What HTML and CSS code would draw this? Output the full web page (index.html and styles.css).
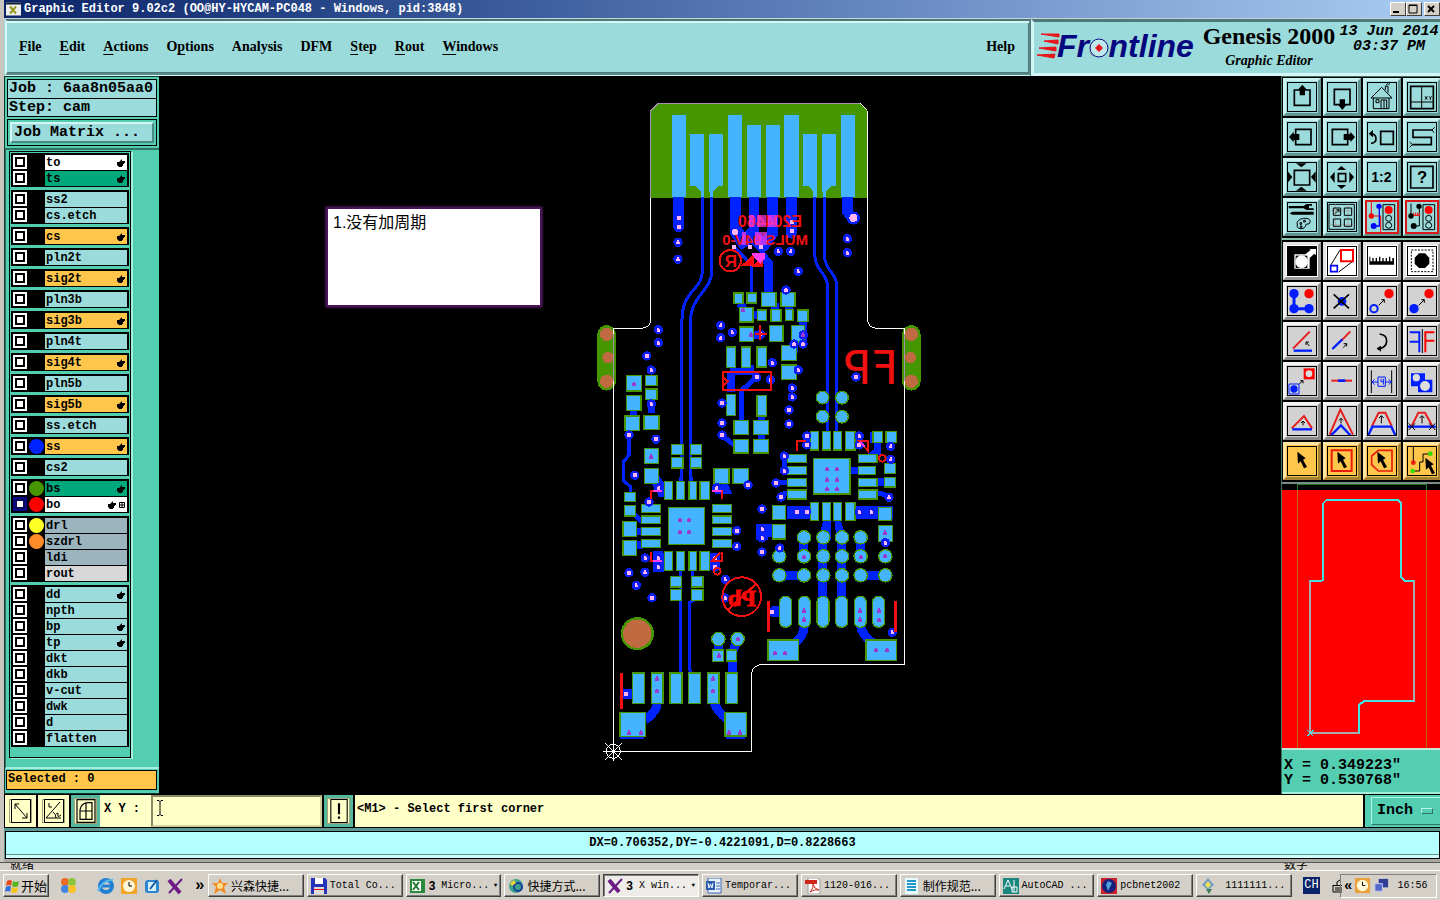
FILE: index.html
```html
<!DOCTYPE html>
<html lang="zh-CN">
<head>
<meta charset="utf-8">
<title>Graphic Editor 9.02c2</title>
<link rel="stylesheet" href="styles.css">
</head>
<body>
<svg class="defs" aria-hidden="true">
  <symbol id="hand" viewBox="0 0 8 8"><path d="M0 3h2l3-3v2h3v2H7v1H6v2H5v1H2L0 6z"/></symbol>
  <symbol id="sq" viewBox="0 0 6 6"><path d="M.5 .5h5v5h-5zM3 .5v5M.5 3h5" fill="none" stroke="#000"/></symbol>
  <g id="v"><circle r="14" fill="#0a1ef5"/><path d="M-5-2h2v-4h6v4h2v8H-5z" fill="#ffb4f4"/></g>
  <g id="w"><circle r="14" fill="#0a1ef5"/><path d="M-6-6H6V6H-6z" fill="#ffb4f4"/></g>
  <path id="m" d="M-6-3h3v-4h6v4h3v9H-6z" fill="#9a3ad2"/>
  <g id="cur"><path d="M31 17l25 20-8 4 12 22-9 4-10-21-8 7z"/></g>
</svg>

<div class="window">
  <header class="title">
    <svg class="xico" viewBox="0 0 15 13"><path fill="#eee" d="M0 0h15v13H0z"/><path fill="#123" d="M0 0h15v2H0z"/><path d="M4 4l6 7M10 4l-6 7" stroke="#999a20" stroke-width="2"/></svg>
    <h1>Graphic Editor 9.02c2 (OO@HY-HYCAM-PC048 - Windows, pid:3848)</h1>
    <div class="winbtns"><button aria-label="Minimize"><svg viewBox="0 0 12 10"><path d="M2 7h6v2H2z"/></svg></button><button aria-label="Maximize"><svg viewBox="0 0 12 10"><path d="M2 1h8v8H2z" fill="none" stroke="#000"/><path d="M2 1h8v1H2z"/></svg></button><button class="close" aria-label="Close"><svg viewBox="0 0 12 10"><path d="M3 2l6 6M9 2L3 8" stroke="#000" stroke-width="2"/></svg></button></div>
  </header>

  <div class="top">
    <nav class="menu">
      <button><u>F</u>ile</button><button><u>E</u>dit</button><button><u>A</u>ctions</button><button>O<u>p</u>tions</button><button>Analysis</button><button>DFM</button><button><u>S</u>tep</button><button><u>R</u>out</button><button><u>W</u>indows</button><button class="help">Help</button>
    </nav>
    <div class="brand">
      <svg class="logo" viewBox="0 0 162 40" role="img" aria-label="Frontline">
        <path d="M4 10h18v3zM7 17l14-1v4zM2 24l17-1v4zM0 31l18-1-1 4z" fill="#e8141c" stroke="#e8141c"/>
        <text x="20" y="33">Frontline</text>
        <circle cx="62" cy="24" r="10" fill="#9bdbdb"/><circle cx="62" cy="24" r="9" fill="#bfe8ea" stroke="#0b0b86" stroke-width="1"/><path d="M62 20l4 4-4 4-4-4z" fill="#e8141c"/>
      </svg>
      <div class="product"><strong>Genesis 2000</strong><em>Graphic Editor</em></div>
      <div class="clock"><span>13 Jun 2014</span><span>03:37 PM</span></div>
    </div>
  </div>

  <main class="main">
    <aside class="side">
      <div class="job"><div>Job : 6aa8n05aa0</div><div>Step: cam</div></div>
      <div class="matrix"><button>Job Matrix ...</button></div>
      <div class="scroll"><div class="layers">
        <div class="grp">
          <div class="row"><input type="checkbox" id="l1"><i></i><label for="l1" class="wh">to<svg><use href="#hand"/></svg></label></div>
          <div class="row"><input type="checkbox" id="l2"><i></i><label for="l2" class="gr">ts<svg><use href="#hand"/></svg></label></div>
        </div>
        <div class="grp">
          <div class="row"><input type="checkbox" id="l3"><i></i><label for="l3">ss2</label></div>
          <div class="row"><input type="checkbox" id="l4"><i></i><label for="l4">cs.etch</label></div>
        </div>
        <div class="grp"><div class="row"><input type="checkbox" id="l5"><i></i><label for="l5" class="or">cs<svg><use href="#hand"/></svg></label></div></div>
        <div class="grp"><div class="row"><input type="checkbox" id="l6"><i></i><label for="l6">pln2t</label></div></div>
        <div class="grp"><div class="row"><input type="checkbox" id="l7"><i></i><label for="l7" class="or">sig2t<svg><use href="#hand"/></svg></label></div></div>
        <div class="grp"><div class="row"><input type="checkbox" id="l8"><i></i><label for="l8">pln3b</label></div></div>
        <div class="grp"><div class="row"><input type="checkbox" id="l9"><i></i><label for="l9" class="or">sig3b<svg><use href="#hand"/></svg></label></div></div>
        <div class="grp"><div class="row"><input type="checkbox" id="l10"><i></i><label for="l10">pln4t</label></div></div>
        <div class="grp"><div class="row"><input type="checkbox" id="l11"><i></i><label for="l11" class="or">sig4t<svg><use href="#hand"/></svg></label></div></div>
        <div class="grp"><div class="row"><input type="checkbox" id="l12"><i></i><label for="l12">pln5b</label></div></div>
        <div class="grp"><div class="row"><input type="checkbox" id="l13"><i></i><label for="l13" class="or">sig5b<svg><use href="#hand"/></svg></label></div></div>
        <div class="grp"><div class="row"><input type="checkbox" id="l14"><i></i><label for="l14">ss.etch</label></div></div>
        <div class="grp"><div class="row"><input type="checkbox" id="l15"><i class="blue"></i><label for="l15" class="or">ss<svg><use href="#hand"/></svg></label></div></div>
        <div class="grp"><div class="row"><input type="checkbox" id="l16"><i></i><label for="l16">cs2</label></div></div>
        <div class="grp">
          <div class="row"><input type="checkbox" id="l17"><i class="green"></i><label for="l17" class="gr">bs<svg><use href="#hand"/></svg></label></div>
          <div class="row"><input type="checkbox" id="l18" class="work"><i class="red"></i><label for="l18" class="wh">bo<svg><use href="#hand"/></svg><svg class="s"><use href="#sq"/></svg></label></div>
        </div>
        <div class="grp">
          <div class="row"><input type="checkbox" id="l19"><i class="yellow"></i><label for="l19" class="dr">drl</label></div>
          <div class="row"><input type="checkbox" id="l20"><i class="orange"></i><label for="l20" class="dr">szdrl</label></div>
          <div class="row"><input type="checkbox" id="l21"><i></i><label for="l21" class="dr">ldi</label></div>
          <div class="row"><input type="checkbox" id="l22"><i></i><label for="l22" class="ro">rout</label></div>
        </div>
        <div class="grp">
          <div class="row"><input type="checkbox" id="l23"><i></i><label for="l23">dd<svg><use href="#hand"/></svg></label></div>
          <div class="row"><input type="checkbox" id="l24"><i></i><label for="l24">npth</label></div>
          <div class="row"><input type="checkbox" id="l25"><i></i><label for="l25">bp<svg><use href="#hand"/></svg></label></div>
          <div class="row"><input type="checkbox" id="l26"><i></i><label for="l26">tp<svg><use href="#hand"/></svg></label></div>
          <div class="row"><input type="checkbox" id="l27"><i></i><label for="l27">dkt</label></div>
          <div class="row"><input type="checkbox" id="l28"><i></i><label for="l28">dkb</label></div>
          <div class="row"><input type="checkbox" id="l29"><i></i><label for="l29">v-cut</label></div>
          <div class="row"><input type="checkbox" id="l30"><i></i><label for="l30">dwk</label></div>
          <div class="row"><input type="checkbox" id="l31"><i></i><label for="l31">d</label></div>
          <div class="row"><input type="checkbox" id="l32"><i></i><label for="l32">flatten</label></div>
        </div>
      </div></div>
      <div class="selected">Selected : 0</div>
    </aside>

    <section class="canvas">
      <svg class="board" viewBox="159 76 1122 718">
       <g transform="translate(590 90) scale(.33333)">
        <path fill="#459600" d="M182 62L205 40H810L832 62V324H182z"/>
        <!-- copper traces -->
        <g class="tr">
          <path stroke-width="32" stroke-linecap="round" d="M266 315V410M436 315V426M492 315V440M548 315V430L520 470M604 315V430M772 315V365L788 384"/>
          <path stroke-width="40" d="M470 420L530 480M436 420L470 470"/>
          <path stroke-width="26" d="M510 490L536 520V620"/>
          <path stroke-width="9" d="M432 470L485 525V610M337 290V545C337 600 276 600 276 690V1175M365 290V545C365 600 302 620 302 690V1175M675 290V500C675 540 712 550 712 585V1030M704 290V500C704 540 740 550 740 585V1030"/>
          <path stroke-width="24" d="M450 640L470 670M555 640V670M598 640V670M470 675H520M640 690V760M520 735H490M612 760V790"/>
          <g transform="translate(0 660)">
            <path stroke-width="22" d="M423 190V245M420 185H480V165M184 260V310M130 300V320M515 315V400M200 525L222 545M375 540H410L400 515M850 365V400M862 395V425L840 440M780 482H810M860 516H885M650 376V410M808 376V410M130 665H155M450 500L475 525"/>
            <path stroke-width="15" d="M500 202L456 240V335M395 375L432 405M860 550Q885 550 898 562M572 560Q580 548 595 550M558 518H595M585 438V480M125 605L155 635"/>
            <path stroke-width="10" d="M117 370V435L101 455V512L121 530V550M271 500V520M304 500V520"/>
            <path stroke-width="38" d="M590 607H660M795 607H910M516 643V690M516 662H560"/>
            <path fill="#0022ff" stroke="none" d="M700 630H722V690H684zM733 630H752L772 690H740z"/>
            <path stroke-width="32" d="M190 500L220 545V560"/>
          </g>
          <g transform="translate(0 1290)">
            <path stroke-width="27" d="M642 50V110M698 50V240M754 50V240M812 50V110M568 166H642M812 166H886M643 315Q643 350 610 372M811 315Q815 345 850 370M385 357V400M443 360L428 395V470M202 545Q202 575 165 600M372 545Q380 575 415 600"/>
            <path stroke-width="32" d="M205 100V155M220 108H190M375 98V150M95 522H127M545 275H575"/>
            <path stroke-width="9" d="M271 150V460M307 150V170M322 235L298 248V450L310 465"/>
            <path stroke-width="22" d="M141 35H160M141 75H160M125 22V30"/>
            <path stroke-width="8" d="M90 653H162M408 653H465"/>
          </g>
        </g>
        <!-- edge connector fingers -->
        <path fill="#45b4ff" d="M246 75h42v247h-42zM300 132h42v173h-9l-18-17h-15zM357 132h42v156h-12l-17 17h-13zM414 75h42v247h-42zM471 105h42v217h-42zM528 105h42v217h-42zM582 75h45v247h-45zM639 132h42v173h-11l-14-17h-17zM696 132h42v156h-14l-15 17h-13zM753 75h42v247h-42zM333 300h9v22h-9zM360 300h9v22h-9zM670 300h10v22h-10zM699 300h10v22h-10z"/>
        <!-- solder pads -->
        <g class="pad">
          <path d="M432 609h27v31h-27zM471 609h29v30h-29zM514 608h44v41h-44zM573 608h42v41h-42zM449 652h40v44h-40zM503 660h26v31h-26zM543 659h30v35h-30zM586 659h23v32h-23zM623 660h31v34h-31z"/>
          <g transform="translate(0 660)">
            <path d="M449 51h42v43h-42zM539 46h40v49h-40zM604 47h40v49h-40zM575 107h44v45h-44zM575 165h44v44h-44zM410 111h26v62h-26zM455 111h26v62h-26zM501 111h28v60h-28zM410 254h26v62h-26zM501 256h28v62h-28zM432 332h44v41h-44zM490 332h45v41h-45zM432 389h44v40h-44zM490 389h45v40h-45z"/>
            <path d="M110 197h44v46h-44zM167 197h34v30h-34zM167 237h34v31h-34zM110 257h43v45h-43zM105 318h43v43h-43zM162 317h45v41h-45zM164 416h41v45h-41zM164 475h41v45h-41zM245 404h34v30h-34zM302 404h32v30h-32zM245 443h34v31h-34zM302 443h32v31h-32zM372 476h45v45h-45zM429 476h46v44h-46zM223 515h25v54h-25zM260 515h24v54h-24zM297 515h22v54h-22zM330 515h29v54h-29zM104 548h33v26h-33zM104 587h33v31h-33zM99 635h41v44h-41zM155 584h56v23h-56zM155 618h56v23h-56zM155 653h56v23h-56zM155 689h56v23h-56zM368 584h56v23h-56zM368 618h56v23h-56zM368 653h56v23h-56zM368 689h56v23h-56zM236 593h107v110h-107z"/>
            <path d="M661 365h24v55h-24zM698 365h23v55h-23zM731 365h23v55h-23zM767 365h28v55h-28zM849 365h29v33h-29zM888 365h31v33h-31zM592 434h57v23h-57zM592 470h57v23h-57zM592 506h57v23h-57zM592 540h57v27h-57zM806 434h55v23h-55zM806 470h51v23h-51zM806 506h55v23h-55zM806 540h55v27h-55zM671 446h109v106h-109zM661 578h24v54h-24zM698 578h23v54h-23zM731 578h23v54h-23zM767 578h28v54h-28zM548 587h39v41h-39zM866 593h39v39h-39zM884 460h33v30h-33zM884 503h33v28h-33zM548 644h39v43h-39zM866 647h41v48h-41z"/>
            <circle cx="698" cy="263" r="19"/><circle cx="756" cy="263" r="19"/><circle cx="698" cy="320" r="19"/><circle cx="756" cy="320" r="19"/>
          </g>
          <g transform="translate(0 1290)">
            <path d="M99 62h41v45h-41zM223 95h25v56h-25zM260 95h24v56h-24zM297 95h22v56h-22zM330 95h29v56h-29zM242 170h33v31h-33zM305 170h34v31h-34zM242 209h33v32h-33zM305 209h34v32h-34zM368 390h32v34h-32zM410 390h30v33h-30zM128 459h35v91h-35zM184 459h35v91h-35zM240 459h36v91h-36zM296 459h35v91h-35zM352 459h35v91h-35zM408 459h34v91h-34zM90 578h77v71h-77zM405 578h64v70h-64zM534 360h91v61h-91zM828 360h91v61h-91z"/>
            <circle cx="385" cy="357" r="20"/><circle cx="443" cy="357" r="20"/>
            <circle cx="642" cy="52" r="20"/><circle cx="700" cy="52" r="20"/><circle cx="756" cy="52" r="20"/><circle cx="812" cy="52" r="20"/>
            <circle cx="568" cy="109" r="20"/><circle cx="642" cy="109" r="20"/><circle cx="700" cy="109" r="20"/><circle cx="756" cy="109" r="20"/><circle cx="812" cy="109" r="20"/><circle cx="886" cy="109" r="20"/>
            <circle cx="568" cy="166" r="20"/><circle cx="642" cy="166" r="20"/><circle cx="700" cy="166" r="20"/><circle cx="756" cy="166" r="20"/><circle cx="812" cy="166" r="20"/><circle cx="886" cy="166" r="20"/>
            <rect x="569" y="229" width="36" height="93" rx="17"/><rect x="625" y="229" width="36" height="93" rx="17"/><rect x="681" y="229" width="36" height="93" rx="17"/><rect x="737" y="229" width="36" height="93" rx="17"/><rect x="793" y="229" width="36" height="93" rx="17"/><rect x="848" y="229" width="36" height="93" rx="17"/>
          </g>
        </g>
        <!-- plated slots and tooling hole -->
        <path d="M50 733V874M964 733V874" stroke="#459600" stroke-width="56" stroke-linecap="round"/>
        <g fill="#c06a42"><circle cx="50" cy="733" r="20"/><circle cx="54" cy="803" r="17"/><circle cx="50" cy="874" r="20"/><circle cx="964" cy="733" r="20"/><circle cx="961" cy="803" r="17"/><circle cx="964" cy="874" r="20"/><circle cx="142" cy="1631" r="46" stroke="#459600" stroke-width="7"/></g>
        <path class="outline" d="M182 62L205 40H810L832 62V685Q834 714 860 715H944V1723H520Q490 1723 485 1750V1984H70V715H155Q182 712 182 688z"/>
        <path d="M182 324V62L205 40H810M70 733V874M944 733V874" fill="none" stroke="#a58fae" stroke-width="4"/>
        <g class="origin"><circle cx="70" cy="1984" r="21"/><path d="M40 1984h60M70 1954v60M45 1959l50 50M95 1959l-50 50"/></g>
        <!-- vias -->
        <g>
          <use href="#w" x="266" y="384"/><use href="#w" x="266" y="411"/><use href="#v" x="264" y="457"/><use href="#v" x="264" y="508"/>
          <circle cx="790" cy="384" r="20" fill="#0022ff"/><circle cx="790" cy="384" r="12" fill="#ffb4f4"/>
          <use href="#v" x="772" y="446"/><use href="#v" x="772" y="488"/><use href="#v" x="565" y="484"/><use href="#v" x="602" y="484"/><use href="#v" x="625" y="544"/><use href="#v" x="588" y="600"/>
          <use href="#v" x="205" y="719"/><use href="#v" x="392" y="706"/><use href="#v" x="392" y="743"/><use href="#v" x="427" y="727"/><use href="#v" x="512" y="733"/><use href="#v" x="640" y="735"/>
          <g transform="translate(0 660)">
            <use href="#v" x="205" y="98"/><use href="#w" x="170" y="138"/><use href="#v" x="184" y="180"/><use href="#v" x="184" y="282"/><use href="#w" x="117" y="375"/><use href="#w" x="198" y="388"/><use href="#w" x="134" y="496"/>
            <use href="#v" x="612" y="102"/><use href="#v" x="639" y="102"/><use href="#v" x="547" y="158"/><use href="#v" x="625" y="180"/><use href="#w" x="500" y="202"/><use href="#v" x="541" y="209"/><use href="#v" x="607" y="234"/><use href="#v" x="607" y="261"/><use href="#w" x="597" y="300"/><use href="#w" x="597" y="342"/><use href="#w" x="798" y="201"/>
            <use href="#w" x="396" y="279"/><use href="#w" x="396" y="339"/><use href="#w" x="396" y="375"/><use href="#w" x="650" y="378"/><use href="#w" x="650" y="405"/><use href="#v" x="808" y="378"/><use href="#w" x="808" y="405"/><use href="#v" x="902" y="409"/><use href="#v" x="902" y="448"/>
            <use href="#v" x="583" y="438"/><use href="#v" x="583" y="482"/><use href="#w" x="558" y="519"/><use href="#w" x="573" y="561"/><use href="#v" x="897" y="562"/><use href="#w" x="474" y="525"/><use href="#v" x="206" y="533"/><use href="#w" x="177" y="576"/><use href="#v" x="380" y="533"/><use href="#w" x="516" y="597"/>
            <use href="#w" x="440" y="662"/><use href="#v" x="440" y="709"/><use href="#w" x="621" y="606"/><use href="#w" x="650" y="606"/><use href="#v" x="808" y="606"/><use href="#v" x="844" y="606"/><use href="#v" x="517" y="656"/><use href="#v" x="517" y="684"/>
          </g>
          <g transform="translate(0 1290)">
            <use href="#w" x="516" y="96"/><use href="#v" x="569" y="84"/><use href="#v" x="166" y="114"/><use href="#v" x="205" y="114"/><use href="#v" x="205" y="141"/><use href="#w" x="117" y="158"/><use href="#v" x="165" y="157"/><use href="#v" x="139" y="196"/><use href="#w" x="186" y="233"/><use href="#v" x="375" y="114"/><use href="#w" x="375" y="141"/><use href="#v" x="406" y="178"/><use href="#v" x="406" y="234"/><use href="#v" x="886" y="68"/><use href="#w" x="545" y="276"/><use href="#v" x="907" y="337"/><use href="#w" x="107" y="522"/>
          </g>
          <path fill="#ffb4f4" d="M474 465h12v12h-12zM507 465h12v12h-12zM426 465h12v12h-12zM600 390h12v12h-12zM600 417h12v12h-12z"/><circle cx="435" cy="426" r="9" fill="#ffb4f4"/>
          <g transform="translate(0 1290)">
            <use href="#m" x="269" y="36"/><use href="#m" x="298" y="36"/><use href="#m" x="269" y="1"/><use href="#m" x="298" y="1"/>
            <use href="#m" x="642" y="111"/><use href="#m" x="812" y="111"/><use href="#m" x="886" y="109"/><use href="#m" x="886" y="38"/><use href="#m" x="643" y="272"/><use href="#m" x="643" y="299"/><use href="#m" x="811" y="272"/><use href="#m" x="811" y="299"/><use href="#m" x="866" y="272"/><use href="#m" x="866" y="301"/>
            <use href="#m" x="555" y="400"/><use href="#m" x="586" y="400"/><use href="#m" x="858" y="390"/><use href="#m" x="891" y="390"/><use href="#m" x="443" y="357"/><use href="#m" x="387" y="407"/><use href="#m" x="202" y="476"/><use href="#m" x="202" y="513"/><use href="#m" x="370" y="476"/><use href="#m" x="370" y="513"/><use href="#m" x="117" y="638"/><use href="#m" x="153" y="638"/><use href="#m" x="417" y="638"/><use href="#m" x="450" y="638"/>
          </g>
          <use href="#m" x="459" y="660"/><use href="#m" x="132" y="882"/><use href="#m" x="184" y="1100"/><use href="#m" x="484" y="734"/><use href="#m" x="638" y="734"/>
          <use href="#m" x="711" y="1137"/><use href="#m" x="741" y="1137"/><use href="#m" x="711" y="1169"/><use href="#m" x="741" y="1169"/><use href="#m" x="711" y="1197"/><use href="#m" x="741" y="1197"/>
        </g>
        <!-- legend -->
        <g class="silk">
          <circle cx="421" cy="512" r="32"/><circle cx="455" cy="1520" r="58"/><path stroke-width="7" d="M500 1480L412 1562"/>
          <path d="M398 845h145v56H398zM400 862l14 12-14 14M511 706v44M495 732h35"/>
          <path d="M183 1228V1202h32M367 1202h30v26M621 1083V1054h28M808 1054l26 28V1054zM183 1385v28h32M397 1385v28h-30l24-24" />
          <circle cx="877" cy="1105" r="10"/><circle cx="382" cy="1444" r="10"/>
          <path stroke-width="9" d="M536 1534v91M916 1534v91M95 1748v110"/>
          <path fill="red" d="M460 525l30-28v28zM492 528l24-28v28z"/>
          <path fill="#ff3cf0" stroke="none" d="M485 490h40v14l-14 18-14-14z"/>
          <path stroke="#ff3cf0" d="M190 1202h25M367 1202h30M190 1413h25M810 1056l14 14"/>
        </g>
       </g>
       <g class="mark">
         <text transform="translate(802 227) scale(-1 1)" font-size="16">E204460</text>
         <text transform="translate(808 245) scale(-1 1)" font-size="15">MULS 94V-0</text>
         <text transform="translate(737 267) scale(-1 1)" font-size="17">R</text>
         <text transform="translate(898 384) scale(-1 1)" class="fp">FP</text>
         <text transform="translate(756 606) scale(-1 1)" class="pb">Pb</text>
       </g>
       <path fill="#ff3cf0" opacity=".7" d="M749 215h5v12h-5zM757 215h9v12h-9zM768 215h9v12h-9zM742 232h4v13h-4zM755 232h12v13h-12z"/>
      </svg>
      <div class="note">1.没有加周期</div>
    </section>

    <aside class="right">
      <div class="tools t1">
        <button aria-label="Pan up"><svg viewBox="0 0 90 90"><path class="n5" d="M22 24h47v46H22z"/><path d="M32 24L46 8l14 16h-6v16H38V24z"/></svg></button>
        <button aria-label="Pan down"><svg viewBox="0 0 90 90"><path class="n5" d="M22 22h47v46H22z"/><path d="M32 67h6V52h16v15h6L46 84z"/></svg></button>
        <button aria-label="Home"><svg viewBox="0 0 90 90"><path class="n3" d="M12 48L44 16l31 32zM19 48v32h47V48M27 53h9v9h-9zM42 80V54h17v26M51 54v26M55 24V13h8v19M57 10l4-5 4 3 4-4"/></svg></button>
        <button aria-label="Windows XY"><svg viewBox="0 0 90 90"><path class="n5" d="M11 13h68v67H11z"/><path class="n3" d="M44 13v67M11 60h68M54 43l7 10M61 43l-7 10M66 43l4 5 4-5M70 48v6"/></svg></button>
        <button aria-label="Pan left"><svg viewBox="0 0 90 90"><path class="n5" d="M26 22h46v46H26z"/><path d="M6 45l14-16v7h17v18H20v7z"/></svg></button>
        <button aria-label="Pan right"><svg viewBox="0 0 90 90"><path class="n5" d="M16 22h46v46H16z"/><path d="M84 45L70 29v7H50v18h20v7z"/></svg></button>
        <button aria-label="Previous view"><svg viewBox="0 0 90 90"><path class="n5" d="M41 28h38v39H41z"/><path class="n5" d="M12 64q16-2 15-15t-16-14"/><path d="M5 35l13-11v22z"/></svg></button>
        <button aria-label="Serpentine"><svg viewBox="0 0 90 90"><path class="n5" d="M16 68h57V46H18V24h57"/><path class="n3" d="M16 68l-8-8M16 68l-8 8M75 24l8-8M75 24l6 8"/></svg></button>
        <button aria-label="Zoom out"><svg viewBox="0 0 90 90"><path class="n5" d="M22 25h46v44H22z"/><path d="M27 4h32L43 16zM27 86h32L43 74zM2 28v34l14-17zM86 28v34L72 45z"/></svg></button>
        <button aria-label="Zoom in"><svg viewBox="0 0 90 90"><path class="n5" d="M34 35h22v23H34z"/><path d="M30 24L43 12l15 12zM30 69l13 12 15-12zM23 29v34L9 45zM67 29v34l14-18z"/></svg></button>
        <button aria-label="Scale 1:2"><svg viewBox="0 0 90 90"><text x="13" y="60" font-size="42">1:2</text></svg></button>
        <button aria-label="Help query"><svg viewBox="0 0 90 90"><path class="n5" d="M11 13h67v65H11z"/><text x="30" y="64" font-size="50">?</text></svg></button>
        <button aria-label="Settings"><svg viewBox="0 0 90 90"><path d="M5 12h45l8-6h17v5H66v8h14v5H58l-8-5H5zM8 34l8-5h64v9H16z"/><path class="thin" d="M30 61q8-14 30-12 14 4 7 16l-10 2q-2 14-15 13-15-2-11-11zM39 62h5v5h-5zM50 55h5v5h-5zM40 72h5v4h-5z"/></svg></button>
        <button aria-label="Panels"><svg viewBox="0 0 90 90"><path class="thin" d="M6 7h76v75H6z"/><path d="M6 26h76M6 68h76M25 7v75M63 7v75" fill="none" stroke="#ae9b9b" stroke-width="2"/><path class="n3" d="M19 18h22v22H19zM52 18h22v22H52zM19 51h22v22H19zM52 51h22v22H52zM24 35l12-12M28 23h8v8"/></svg></button>
        <button class="hot" aria-label="Net on"><svg viewBox="0 0 90 90"><path d="M13 0v42h28v48" fill="none" stroke="red" stroke-width="3"/><path d="M37 12v60H19" fill="none" stroke="#00f" stroke-width="4"/><circle cx="36" cy="13" r="8" fill="#00f"/><circle cx="20" cy="72" r="9" fill="#00f"/><circle cx="13" cy="42" r="8" fill="red"/><path class="n3" d="M48 8h35v75H48z"/><circle cx="65" cy="24" r="12" fill="red"/><circle class="n3" cx="65" cy="49" r="9"/><circle class="n3" cx="65" cy="70" r="9"/></svg></button>
        <button class="hot" aria-label="Net off"><svg viewBox="0 0 90 90"><path class="n3" d="M12 5v36M37 12v60H18M48 8h35v75H48z"/><path d="M18 40h20M20 40v-8M26 40v-8M32 40v-8M38 40v-8" stroke="red" stroke-width="3"/><circle cx="36" cy="13" r="8"/><circle cx="20" cy="72" r="9"/><circle cx="12" cy="42" r="8"/><circle cx="65" cy="24" r="12" fill="red"/><circle class="n3" cx="65" cy="49" r="9"/><circle class="n3" cx="65" cy="70" r="9"/></svg></button>
      </div>
      <div class="tools t2">
        <button class="w" aria-label="Negative"><svg viewBox="0 0 90 90"><path d="M2 2h86v86H2z"/><path d="M22 25h33l16-13-4-3h20v19l-5-5-14 13v32H22z" fill="#fff"/><path d="M26 29h35v37H26z"/><circle cx="44" cy="47" r="19" fill="#fff"/></svg></button>
        <button class="w" aria-label="Magnify"><svg viewBox="0 0 90 90"><path class="n3" d="M11 58L39 12M35 78l41-31"/><path d="M42 12h36v34H42z" fill="none" stroke="red" stroke-width="6"/><path d="M11 59h20v18H11z" fill="none" stroke="#00f" stroke-width="5"/></svg></button>
        <button class="w" aria-label="Measure"><svg viewBox="0 0 90 90"><path d="M7 32h3v14h6V36h4v10h6V36h4v10h6V32h4v14h6V36h4v10h6V36h4v10h6V32h4v14h6V36h5v20H7z"/></svg></button>
        <button class="w" aria-label="Select dot"><svg viewBox="0 0 90 90"><path class="n3" stroke-dasharray="6 4" d="M13 12h65v65H13z"/><path d="M36 22h18l13 13v18L54 66H36L23 53V35z"/></svg></button>
        <button aria-label="Add line"><svg viewBox="0 0 90 90"><path d="M21 23v45h45" fill="none" stroke="#001eff" stroke-width="9"/><g fill="#001eff"><circle cx="21" cy="23" r="14"/><circle cx="21" cy="68" r="14"/><circle cx="66" cy="68" r="14"/></g><circle cx="66" cy="23" r="14" fill="red"/></svg></button>
        <button aria-label="Delete"><svg viewBox="0 0 90 90"><circle cx="45" cy="46" r="13" fill="#001eff"/><path class="n5" d="M20 25l46 42M66 25L20 67"/></svg></button>
        <button aria-label="Move"><svg viewBox="0 0 90 90"><circle cx="21" cy="68" r="11" fill="none" stroke="#001eff" stroke-width="6"/><circle cx="66" cy="23" r="14" fill="red"/><path class="n3" d="M35 58l16-16M43 41h9v9"/></svg></button>
        <button aria-label="Copy"><svg viewBox="0 0 90 90"><circle cx="21" cy="68" r="14" fill="#001eff"/><circle cx="66" cy="23" r="14" fill="red"/><path class="n3" d="M35 58l16-16M43 41h9v9"/></svg></button>
        <button aria-label="Rotate angle"><svg viewBox="0 0 90 90"><path d="M18 68l50-51" class="r"/><path d="M20 74h55" class="b"/><path class="n3" d="M67 60L58 49M57 57v-9h9"/></svg></button>
        <button aria-label="Extend"><svg viewBox="0 0 90 90"><path d="M43 44l27-28" class="r"/><path d="M16 69l30-29" class="b"/><path class="n3" d="M49 65l10-12M50 53h9v8"/></svg></button>
        <button aria-label="Turn"><svg viewBox="0 0 90 90"><path class="n5" d="M38 24q22 3 21 22t-27 24"/><path d="M29 67l13-8v18z"/></svg></button>
        <button aria-label="Mirror"><svg viewBox="0 0 90 90"><path d="M8 19h29v60M8 47h29" fill="none" stroke="#001eff" stroke-width="6"/><path d="M82 19H55v60M55 44h27" fill="none" stroke="red" stroke-width="6"/><path class="n3" d="M46 9v72"/></svg></button>
        <button aria-label="Substitute"><svg viewBox="0 0 90 90"><path d="M50 7h33v33H50z" fill="red"/><circle cx="66" cy="23" r="10" fill="#ddd"/><path d="M6 54h30v30H6z" fill="none" stroke="#001eff" stroke-width="3"/><circle cx="21" cy="69" r="11" fill="#001eff"/><path class="n3" d="M37 54l9-9M40 44h8v8"/></svg></button>
        <button aria-label="Break"><svg viewBox="0 0 90 90"><path d="M13 44h62" class="r"/><path d="M33 44h22" stroke="#001eff" stroke-width="8"/></svg></button>
        <button aria-label="Resize"><svg viewBox="0 0 90 90"><path class="n3" d="M13 13v68M74 13v68"/><path d="M14 48h19M55 48h19M23 40l-8 8 8 8M65 40l8 8-8 8M33 33h22v28H33zM42 38v9h7M49 38v18" fill="none" stroke="#001eff" stroke-width="3"/></svg></button>
        <button aria-label="Merge"><svg viewBox="0 0 90 90"><path d="M12 22h42v19h22v38H33V61H12z" fill="#001eff"/><circle cx="28" cy="35" r="11" fill="#ddd"/><circle cx="54" cy="60" r="15" fill="#ddd"/></svg></button>
        <button aria-label="Corner"><svg viewBox="0 0 90 90"><path d="M14 67l37-37 24 37" class="r"/><path d="M16 70h59" class="b"/><path class="n3" d="M48 58V45M42 51l6-6 6 6"/></svg></button>
        <button aria-label="Peak"><svg viewBox="0 0 90 90"><path d="M8 86l32-75 38 75" class="r"/><path d="M12 88l30-30 28 30" class="b"/><path class="n3" d="M42 52V37M36 43l6-6 6 6"/></svg></button>
        <button aria-label="Trapezoid"><svg viewBox="0 0 90 90"><path d="M15 60l20-40h20l19 40" class="r"/><path d="M4 88l12-26h57l12 26" class="b"/><path class="n3" d="M43 52V30M36 36l7-7 7 7"/></svg></button>
        <button aria-label="Trim"><svg viewBox="0 0 90 90"><path d="M14 60l20-40h20l22 40" class="r"/><path d="M2 62h84" class="b"/><path class="n3" d="M45 52V30M38 36l7-7 7 7M5 52l19 20M24 52L5 72M66 52l19 20M85 52L66 72"/></svg></button>
        <button class="o" aria-label="Select"><svg viewBox="0 0 90 90"><use href="#cur"/></svg></button>
        <button class="o" aria-label="Select by frame"><svg viewBox="0 0 90 90"><path d="M14 13h60v62H14z" fill="none" stroke="#e81c08" stroke-width="6"/><use href="#cur"/></svg></button>
        <button class="o" aria-label="Select by polygon"><svg viewBox="0 0 90 90"><path d="M34 13h41v62H34L14 56V30z" fill="none" stroke="#e81c08" stroke-width="5"/><use href="#cur"/></svg></button>
        <button class="o" aria-label="Select by net"><svg viewBox="0 0 90 90"><path class="n3" d="M19 0v48M19 75h19V48h10V24h20"/><circle cx="19" cy="50" r="7" fill="#e81c08"/><circle cx="17" cy="75" r="7" fill="#3d0"/><circle cx="70" cy="23" r="7" fill="#3d0"/><use href="#cur" x="24" y="18"/></svg></button>
      </div>
      <svg class="preview" viewBox="18 15 474 786" preserveAspectRatio="none">
        <path fill="red" d="M18 15h474v786H18z"/><path d="M18 15h474v18H18z"/>
        <path d="M65 801V16h386v785" fill="none" stroke="#c06a00" stroke-width="3"/><path d="M65 32V16h386v16" fill="none" stroke="#1d7a1d" stroke-width="3"/>
        <path d="M102 756V303h33q7 0 7-8V72l9-9h215l9 9v220l10 11h29v359H264l-15 10v84z" fill="none" stroke="#45e0e0" stroke-width="6"/>
        <path d="M102 756V305M102 756h147M413 305v355" stroke="#aaa" stroke-width="6"/>
        <path d="M94 748l18 18M112 748l-18 18" stroke="#45e0e0" stroke-width="3"/>
      </svg>
      <div class="coords"><span>X = 0.349223"</span><span>Y = 0.530768"</span></div>
    </aside>
  </main>

  <div class="command">
    <button aria-label="Snap"><svg viewBox="0 0 20 24"><path class="k" d="M.5 .5h19v23H.5zM4 5l12 14M4 10V5h4M16 14v5h-5"/></svg></button>
    <button aria-label="Angle"><svg viewBox="0 0 20 24"><path class="k" d="M.5 .5h19v23H.5zM2 19L16 3M5 4v4h3M2 19h15M9 13q3 2 3 6M12 15q3-2 2 1t3 0"/></svg></button>
    <button class="on" aria-label="Grid"><svg viewBox="0 0 16 20"><path class="k" d="M.5 .5h15v19H.5zM3 17V9q1-6 7-6h3v14zM8 3v14M3 10h10"/></svg></button>
    <label for="xy">X Y :</label>
    <div class="field"><input id="xy" type="text"><svg viewBox="0 0 6 16"><path class="k" d="M0 .5h2l1 1 1-1h2M3 1v14M0 15.5h2l1-1 1 1h2"/></svg></div>
    <button class="on bang" aria-label="Interrupt"><svg viewBox="0 0 16 22"><path class="k" d="M.5 .5h15v21H.5z"/><path d="M7 4h2v10H7zM7 16h2v2H7z"/></svg></button>
    <div class="prompt">&lt;M1&gt; - Select first corner</div>
    <div class="unit"><button>Inch<i></i></button></div>
  </div>
  <div class="status"><div>DX=0.706352,DY=-0.4221091,D=0.8228663</div></div>
</div>

<div class="under"><span>就绪</span><span class="num">数字</span></div>

<footer class="taskbar">
  <button class="start"><svg viewBox="0 0 16 16"><path d="M3 3q3-2 5 0L7 8Q5 6 2 8z" fill="#e8491c"/><path d="M9 3q3 2 6 0l-1 5q-3 2-6 0z" fill="#57b51c"/><path d="M2 9q3-2 5 0l-1 5q-2-2-5 0z" fill="#2f6fe0"/><path d="M8 9q3 2 6 0l-1 5q-3 2-6 0z" fill="#f5c518"/></svg>开始</button>
  <div class="quick">
    <svg viewBox="0 0 18 18"><circle cx="5" cy="5" r="4" fill="#ee6b25"/><circle cx="12" cy="5" r="4" fill="#8cc63f"/><circle cx="5" cy="12" r="4" fill="#4384e0"/><circle cx="12" cy="12" r="4" fill="#f7c325"/></svg>
    <svg viewBox="0 0 18 18"><circle cx="9" cy="9" r="6" fill="none" stroke="#1f7fd4" stroke-width="4"/><path d="M5 9h10" stroke="#1f7fd4" stroke-width="3"/><path d="M1 14Q6 2 16 3" stroke="#53b7f0" fill="none" stroke-width="2"/></svg>
    <svg viewBox="0 0 18 18"><rect x="1" y="1" width="16" height="16" fill="#f1a42c"/><circle cx="9" cy="9" r="6" fill="#fff6d8"/><path class="k" d="M9 5v4h3"/></svg>
    <svg viewBox="0 0 18 18"><rect x="2" y="3" width="14" height="13" rx="3" fill="#2c86cf"/><path d="M5 5h8v9H5z" fill="#d5eefc"/><path d="M7 12l7-9" stroke="#1e5c9c" stroke-width="2"/></svg>
    <svg viewBox="0 0 18 18"><path d="M3 3l11 13" stroke="#6d1a86" stroke-width="4"/><path d="M16 2L3 16" stroke="#6d1a86" stroke-width="2"/></svg>
    <b>»</b>
  </div>
  <div class="tasks">
    <button class="cn"><svg viewBox="0 0 16 16"><path d="M8 0l2 5h6l-4 4 2 7-6-4-6 4 2-7-4-4h6z" fill="#f18a1f"/><circle cx="8" cy="8" r="3" fill="#ffe08a"/></svg>兴森快捷...</button>
    <button><svg viewBox="0 0 16 16"><path d="M0 0h14l2 2v14H0z" fill="#2433b8"/><path d="M4 0h8v6H4z" fill="#fff"/><path d="M3 9h10v7H3z" fill="#ddd"/><path d="M3 11h10v1H3z" fill="red"/></svg>Total Co...</button>
    <button><svg viewBox="0 0 16 16"><path d="M0 1h15v14H0z" fill="#2c8a3c"/><path d="M2 3h9v10H2z" fill="#fff"/><path d="M3 4l6 8M9 4l-6 8" stroke="#1f7a30" stroke-width="2"/></svg><b>3</b>&nbsp;Micro...<small>▼</small></button>
    <button class="cn"><svg viewBox="0 0 16 16"><circle cx="8" cy="8" r="7" fill="#3aa18c"/><circle cx="10" cy="9" r="4" fill="none" stroke="#1b3f9b" stroke-width="2"/><path d="M2 5l4-3 2 3-4 3z" fill="#e7d23c"/></svg>快捷方式...</button>
    <button class="active"><svg viewBox="0 0 16 16"><path d="M2 2l10 12" stroke="#6d1a86" stroke-width="4"/><path d="M15 1L2 15" stroke="#6d1a86" stroke-width="2"/></svg><b>3</b>&nbsp;X win...<small>▼</small></button>
    <button><svg viewBox="0 0 16 16"><path d="M2 0h13v15H2z" fill="#e8f0fb" stroke="#3868b8"/><path d="M0 3h9v9H0z" fill="#2b5cab"/><path d="M2 5l1 5 1.500-4L6 10l1-5" stroke="#fff" fill="none"/><path d="M10 5h4M10 8h4M10 11h4" stroke="#3868b8"/></svg>Temporar...</button>
    <button><svg viewBox="0 0 16 16"><path d="M3 0h10l2 3v13H3z" fill="#fff" stroke="#999"/><path d="M0 2h12v4H0z" fill="#d2261c"/><path d="M5 14q4-4 3-8 1 5 6 6-5-1-9 2" stroke="#d2261c" fill="none"/></svg>1120-016...</button>
    <button class="cn"><svg viewBox="0 0 16 16"><path d="M1 0h13v16H1z" fill="#e8fbff"/><path d="M3 3h9M3 6h9M3 9h9M3 12h9" stroke="#2496c8" stroke-width="2"/></svg>制作规范...</button>
    <button><svg viewBox="0 0 16 16"><path d="M0 0h16v16H0z" fill="#19877e"/><path d="M1 11l4-9 4 9M3 8h4M9 9h5v5H9zM11 2v12" stroke="#fff" fill="none"/></svg>AutoCAD ...</button>
    <button><svg viewBox="0 0 16 16"><path d="M0 0h16v16H0z" fill="#c8202c"/><circle cx="8" cy="8" r="7" fill="#14207c"/><path d="M7 3l4 2-2 4-2 4-2-6z" fill="#4fa1d8"/></svg>pcbnet2002</button>
    <button><svg viewBox="0 0 16 16"><path d="M8 0l6 7-6 5-6-5z" fill="#6f9fc0"/><path d="M8 3l3 4-3 3-3-3z" fill="#f2e35a"/><path d="M6 11h6l-3 5z" fill="#3f7a5a"/></svg>&nbsp;1111111...</button>
  </div>
  <span class="lang">CH</span>
  <svg class="kb" viewBox="0 0 10 14"><path class="k" d="M1 6.500h9M1 6v7h9M3 9h7M3 11h7M5 6V3l3-2"/></svg>
  <div class="tray"><b>«</b><svg viewBox="0 0 18 18"><rect x="1" y="1" width="16" height="16" fill="#e9a13b"/><circle cx="9" cy="9" r="6" fill="#fff6d8"/><path class="k" d="M9 5v4h3"/></svg><svg viewBox="0 0 18 18"><path d="M6 2h10v9H6z" fill="#303e96"/><path d="M2 7h8v8H2z" fill="#5468c8" stroke="#c4ccf0"/></svg><time>16:56</time></div>
</footer>
</body>
</html>
```
FILE: styles.css
```css
* { box-sizing: border-box; }
body {
  margin: 0; min-height: 100vh; display: flex; flex-direction: column; overflow-x: hidden;
  background: #d4d0c8; color: #000;
  font: bold 12px/14px "Liberation Mono", "Noto Sans CJK SC", monospace;
}
button { font: inherit; color: inherit; margin: 0; padding: 0; border-radius: 0; cursor: pointer; }
svg { display: block; flex: none; }
.defs { position: absolute; width: 0; height: 0; }
.k { fill: none; stroke: #000; }
.window { flex: 1; display: flex; flex-direction: column; border-left: 4px solid #c9c6bf; min-width: 0; }

.title { height: 19px; display: flex; align-items: center; gap: 3px; padding-left: 2px; background: linear-gradient(90deg, #0c2468, #2a4a8c 25%, #6d8fc6 65%, #a9cdf2); border-bottom: 1px solid #c9d2d6; color: #fff; overflow: hidden; }
.title h1 { margin: 0; flex: 1; font-size: 12px; white-space: nowrap; }
.xico { width: 15px; height: 14px; }
.winbtns { display: flex; }
.winbtns button { width: 16px; height: 14px; background: #d4d0c8; border: 1px solid; border-color: #fff #404040 #404040 #fff; }
.winbtns svg { width: 12px; height: 10px; }
.winbtns .close { margin-left: 2px; }

.top { height: 57px; display: flex; background: #9bdbdb; }
.menu { flex: 1; display: flex; align-items: center; gap: 18px; padding: 0 14px 0 12px; margin: 0 0 1px 1px; border: 2px solid; border-color: #4c7a78 #5c8c8a #5c8c8a #d8f6f4; box-shadow: inset 0 2px #d4f6f4, inset -1px -1px #4c7a78, 0 1px #d8f6f4; font: bold 14px/18px "Liberation Serif", serif; }
.menu button { border: 0; background: none; }
.menu u { text-underline-offset: 3px; }
.menu .help { margin-left: auto; }
.brand { width: 409px; display: flex; border: solid; border-color: #4c7a78 #9bdbdb #d4f6f4 #d4f6f4; border-width: 3px 0 3px 3px; box-shadow: -1px 0 #4c7a78; padding: 0 0 0 3px; overflow: hidden; }
.logo { width: 162px; height: 40px; margin-top: 2px; }
.logo text { font: italic bold 32px "Liberation Sans", sans-serif; fill: #06067e; }
.product { width: 138px; margin-left: 1px; display: flex; flex-direction: column; align-items: center; font-family: "Liberation Serif", serif; white-space: nowrap; }
.product strong { font-size: 24px; line-height: 28px; }
.product em { font-size: 14px; line-height: 22px; }
.clock { flex: 1; display: flex; flex-direction: column; align-items: center; font: italic bold 15px/15px "Liberation Mono", monospace; white-space: nowrap; padding-top: 2px; }

.main { flex: 1; display: flex; background: #000; min-height: 0; }
.side { width: 155px; display: flex; flex-direction: column; background: #54ceb0; border: 1px solid #12372f; border-right: 0; }
.job { margin: 2px 2px 0; border: 1px solid #000; background: #9bdbdb; font-size: 15px; white-space: nowrap; overflow: hidden; }
.job div { height: 18px; line-height: 17px; padding-left: 1px; }
.job div + div { border-top: 1px solid #000; }
.matrix { margin: 2px 2px 2px; border: 1px solid #000; padding: 2px; }
.matrix button { display: block; width: 100%; height: 21px; text-align: left; padding-left: 2px; background: #9bdbdb; border: 2px solid; border-color: #d4f6f4 #4c8a8a #4c8a8a #d4f6f4; font-size: 15px; line-height: 16px; }
.scroll { flex: 1; display: flex; flex-direction: column; padding: 1px 28px 9px 3px; border: solid #2e7464; border-width: 2px 0 0 1px; border-bottom: 2px solid #a4f0dc; }
.layers { flex: 1; border: 1px solid #000; box-shadow: 2px 1px #a4f0dc; padding: 1px 1px 8px; display: flex; flex-direction: column; gap: 3px; }
.grp { background: #000; padding: 2px; display: grid; gap: 2px; }
.row { display: grid; grid-template-columns: 14px 16px 1fr; gap: 1px; height: 14px; }
.row input { appearance: none; margin: 0; width: 14px; height: 14px; background: #fff; border: 2px solid #fff; box-shadow: inset 0 0 0 2px #000; }
.row .work { border-color: #0a0a86; box-shadow: inset 0 0 0 2px #0a0a60; }
.row i { width: 15px; height: 15px; border-radius: 50%; align-self: center; justify-self: center; }
.blue { background: #0022ff; } .green { background: #459600; } .red { background: #f00; } .yellow { background: #ffff28; } .orange { background: #ff8c28; }
.row label { background: #9bdbdb; padding: 0 2px 0 1px; display: flex; align-items: center; line-height: 14px; gap: 3px; }
.row label svg { width: 8px; height: 8px; margin-left: auto; }
.row label .s { width: 6px; height: 6px; margin-left: 0; }
.row .wh { background: #fff; } .row .gr { background: #00a87c; } .row .or { background: #ffc64b; } .row .dr { background: #9bb4be; } .row .ro { background: #d8d8d8; }
.selected { margin: 1px 2px 3px 1px; height: 20px; border: 1px solid #000; background: #ffc64b; padding-left: 1px; line-height: 17px; }

.canvas { flex: 1; position: relative; min-width: 0; background: #000; }
.board { width: 100%; height: 100%; shape-rendering: crispEdges; }
.tr { fill: none; stroke: #0022ff; }
.pad { fill: #45b4ff; stroke: #459600; stroke-width: 4; }
.outline { fill: none; stroke: #fff; stroke-width: 3; }
.origin { fill: none; stroke: #fff; stroke-width: 3; }
.silk { fill: none; stroke: #f01010; stroke-width: 6; }
.mark { fill: #f01010; font-family: "Liberation Sans", sans-serif; font-weight: bold; }
.fp { font-family: "DejaVu Sans", sans-serif; font-size: 46px; font-weight: normal; }
.pb { font: bold 24px "Liberation Serif", serif; stroke: red; }
.note { position: absolute; left: 167px; top: 131px; width: 216px; height: 100px; background: #fff; border: 2px solid #4a1458; box-shadow: 0 0 3px #6d2a80; padding: 5px; font: 16px/18px "Liberation Sans", "Noto Sans CJK SC", sans-serif; }

.right { width: 159px; overflow: hidden; display: flex; flex-direction: column; background: #000; border-top: 1px solid #3c7468; border-left: 1px solid #3c7468; }
.tools { display: grid; grid-template-columns: repeat(4, 38px); gap: 2px; padding: 1px; }
.t1 { padding-bottom: 2px; border-bottom: 2px solid #8ac0ac; }
.t2 { padding: 2px 1px 2px; border-bottom: 2px solid #7c8c8c; }
.tools button { width: 38px; height: 38px; padding: 1px; background: #9bdbdb; border: 3px solid; border-color: #caf2f0 #5f9492 #5f9492 #caf2f0; }
.tools button > svg { width: 30px; height: 30px; outline: 1px solid #000; outline-offset: -1px; }
.tools text { font-family: "Liberation Sans", sans-serif; font-weight: bold; }
.t2 button { background: #d2d2d2; border-color: #f4f4f4 #8c8c8c #8c8c8c #f4f4f4; }
.t2 .w { background: #fff; border-color: #e4e4e4 #9c9c9c #9c9c9c #e4e4e4; }
.t2 .o { background: #ffc64b; border-color: #ffe4a4 #a88234 #a88234 #ffe4a4; }
.tools .hot > svg { outline: 2px solid #d81818; outline-offset: 0; }
.n5 { fill: none; stroke: #000; stroke-width: 5; }
.n3 { fill: none; stroke: #000; stroke-width: 3; }
.thin { fill: none; stroke: #000; stroke-width: 3; }
.r { fill: none; stroke: #e81c1c; stroke-width: 6; }
.b { fill: none; stroke: #001eff; stroke-width: 7; }
.preview { width: 158px; flex: 1; min-height: 0; shape-rendering: crispEdges; }
.coords { height: 46px; display: flex; flex-direction: column; padding: 8px 2px; background: #54ceb0; border-top: 2px solid #c4e8dc; border-bottom: 2px solid #a4f0dc; font: bold 15px/15px "Liberation Mono", monospace; }

.command { height: 34px; display: flex; gap: 2px; padding: 1px 0 1px 1px; background: #000; }
.command > button { width: 31px; background: #ffffc8; border: 4px solid #ffffc8; box-shadow: inset 0 0 0 1px #a4a478; display: grid; place-items: center; }
.command > button svg { width: 20px; height: 24px; }
.command > button.on { width: 29px; border: 3px solid #54b89c; }
.command > label { background: #ffffc8; margin-left: -2px; width: 51px; padding-left: 4px; line-height: 28px; white-space: nowrap; font-size: 12px; }
.field { position: relative; width: 171px; margin-left: -2px; background: #ffffc8; }
.field input { width: 100%; height: 100%; background: #ffffc8; border: 2px solid; border-color: #8c8c64 #d0d09c #d0d09c #8c8c64; outline: 0; }
.field svg { position: absolute; left: 6px; top: 5px; width: 6px; height: 16px; }
.prompt { flex: 1; background: #ffffc8; padding-left: 2px; line-height: 29px; }
.unit { width: 75px; background: #54ceb0; padding: 2px 0 2px 6px; overflow: hidden; }
.unit button { width: 72px; height: 28px; background: #54ceb0; border: 1px solid; border-color: #b4f4e4 #2e7464 #2e7464 #b4f4e4; display: flex; align-items: center; gap: 8px; padding-left: 5px; font-size: 15px; }
.unit i { width: 12px; height: 6px; border: 1px solid; border-color: #b4f4e4 #2e7464 #2e7464 #b4f4e4; }
.status { height: 34px; padding: 3px 0 3px 1px; background: #5c9490; border-bottom: 3px solid #aaa8a4; }
.status div { height: 28px; border: 1px solid #000; background: #b4ffff; text-align: center; line-height: 23px; box-shadow: inset 0 -3px #d4ffff, inset 0 -4px #5c9490; }

.under { height: 8px; overflow: hidden; display: flex; justify-content: space-between; padding: 0 132px 0 10px; border-top: 1px solid #555; font: 12px/2px "Noto Sans CJK SC", sans-serif; }
.taskbar { height: 30px; display: flex; align-items: center; padding: 1px 3px; border-top: 1px solid #fff; font-weight: normal; gap: 4px; white-space: nowrap; }
.taskbar button { height: 23px; display: flex; align-items: center; background: #d4d0c8; border: 1px solid; border-color: #fff #404040 #404040 #fff; box-shadow: inset -1px -1px #808080; overflow: hidden; }
.taskbar .start { width: 46px; gap: 1px; font: 13px/16px "Noto Sans CJK SC", sans-serif; }
.start svg { width: 16px; height: 16px; }
.quick { width: 151px; display: flex; align-items: center; gap: 5px; padding-left: 7px; }
.quick svg { width: 18px; height: 18px; }
.quick svg:first-child { margin-right: 14px; }
.quick b { margin-left: 6px; font-size: 16px; }
.tasks { flex: 1; display: grid; grid-template-columns: repeat(11, 1fr); gap: 3px; min-width: 0; }
.tasks button { padding-left: 3px; gap: 3px; font-size: 10px; }
.tasks svg { width: 16px; height: 16px; }
.tasks b { font: bold 12px "Liberation Sans", sans-serif; margin-right: -3px; }
.tasks small { margin-left: auto; font-size: 6px; padding-right: 3px; }
.taskbar .cn { font: 12px/16px "Noto Sans CJK SC", sans-serif; }
.tasks .active { background: #eeece8; border-color: #404040 #fff #fff #404040; box-shadow: inset 1px 1px #808080; }
.lang { margin-left: 7px; background: #0a246a; color: #fff; width: 17px; height: 17px; line-height: 17px; text-align: center; font-size: 12px; }
.kb { width: 10px; height: 14px; margin-left: 8px; }
.tray { width: 97px; height: 24px; margin-left: -6px; display: flex; align-items: center; gap: 2px; padding-left: 3px; border: 1px solid; border-color: #808080 #fff #fff #808080; font-size: 10px; }
.tray svg { width: 17px; height: 17px; }
.tray b { font-size: 14px; }
.tray time { margin-left: 5px; }
```
